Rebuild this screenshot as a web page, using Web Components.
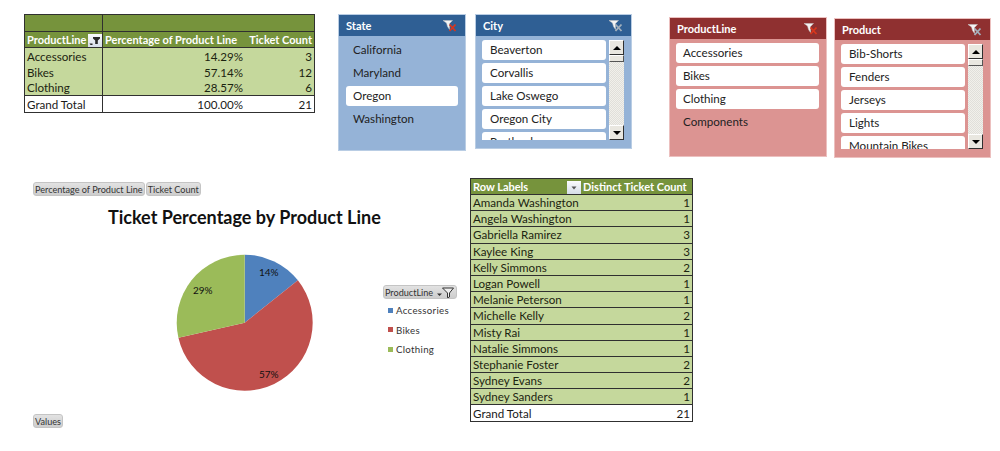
<!DOCTYPE html>
<html>
<head>
<meta charset="utf-8">
<title>Ticket dashboard</title>
<style>
  html, body { margin: 0; background: #fff; }
  body { font-family: Lato, "Open Sans", sans-serif; font-size: 11.6px; color: #1a1a1a; }
  .top { display: flex; align-items: flex-start; height: 178px; }
  .bottom { display: flex; align-items: flex-start; padding-left: 33px; }
  .m1 { margin: 14px 0 0 24px; }
  .m2 { margin: 14px 0 0 23px; }
  .m3 { margin: 14px 0 0 9px; }
  .m4 { margin: 17px 0 0 37px; }
  .m5 { margin: 18px 0 0 7px; }
  .m6 { margin: 0 0 0 13px; }
</style>
</head>
<body>
<div class="top">
  <pivot-table class="m1" style="width:291px;--cols:77px 143px 1fr">
    <pivot-row kind="head" h="17" line><pivot-cell></pivot-cell><pivot-cell sep></pivot-cell><pivot-cell></pivot-cell></pivot-row>
    <pivot-row kind="head" h="16" line><pivot-cell>ProductLine<filter-button slot="end" funnel></filter-button></pivot-cell><pivot-cell sep>Percentage of Product Line</pivot-cell><pivot-cell end>Ticket Count</pivot-cell></pivot-row>
    <pivot-row h="16"><pivot-cell>Accessories</pivot-cell><pivot-cell sep end>14.29%</pivot-cell><pivot-cell end>3</pivot-cell></pivot-row>
    <pivot-row h="16"><pivot-cell>Bikes</pivot-cell><pivot-cell sep end>57.14%</pivot-cell><pivot-cell end>12</pivot-cell></pivot-row>
    <pivot-row h="16" line><pivot-cell>Clothing</pivot-cell><pivot-cell sep end>28.57%</pivot-cell><pivot-cell end>6</pivot-cell></pivot-row>
    <pivot-row kind="total" h="16"><pivot-cell>Grand Total</pivot-cell><pivot-cell sep end>100.00%</pivot-cell><pivot-cell end>21</pivot-cell></pivot-row>
  </pivot-table>

  <slicer-box class="m2" label="State" style="width:128px;height:137px;--inset:7px" active>
    <slicer-item plain>California</slicer-item>
    <slicer-item plain>Maryland</slicer-item>
    <slicer-item>Oregon</slicer-item>
    <slicer-item plain>Washington</slicer-item>
  </slicer-box>

  <slicer-box class="m3" label="City" style="width:157px;height:135px" list="100" scroll>
    <slicer-item>Beaverton</slicer-item>
    <slicer-item>Corvallis</slicer-item>
    <slicer-item>Lake Oswego</slicer-item>
    <slicer-item>Oregon City</slicer-item>
    <slicer-item>Portland</slicer-item>
  </slicer-box>

  <slicer-box class="m4" label="ProductLine" theme="red" style="width:158px;height:140px" active>
    <slicer-item>Accessories</slicer-item>
    <slicer-item>Bikes</slicer-item>
    <slicer-item>Clothing</slicer-item>
    <slicer-item plain>Components</slicer-item>
  </slicer-box>

  <slicer-box class="m5" label="Product" theme="red" style="width:157px;height:140px" list="105" scroll>
    <slicer-item>Bib-Shorts</slicer-item>
    <slicer-item>Fenders</slicer-item>
    <slicer-item>Jerseys</slicer-item>
    <slicer-item>Lights</slicer-item>
    <slicer-item>Mountain Bikes</slicer-item>
  </slicer-box>
</div>

<div class="bottom">
  <pie-chart heading="Ticket Percentage by Product Line">
    <pivot-button slot="fields">Percentage of Product Line</pivot-button>
    <pivot-button slot="fields">Ticket Count</pivot-button>
    <pivot-button slot="values">Values</pivot-button>
  </pie-chart>
  <chart-legend>
    <pivot-button filter>ProductLine</pivot-button>
    <legend-entry color="#4f81bd">Accessories</legend-entry>
    <legend-entry color="#c0504d">Bikes</legend-entry>
    <legend-entry color="#9bbb59">Clothing</legend-entry>
  </chart-legend>
  <pivot-table class="m6" style="width:223px;--cols:110px 1fr">
    <pivot-row kind="head" h="16" line><pivot-cell>Row Labels<filter-button slot="end"></filter-button></pivot-cell><pivot-cell>Distinct Ticket Count</pivot-cell></pivot-row>
    <pivot-row h="16.2" line><pivot-cell>Amanda Washington</pivot-cell><pivot-cell end>1</pivot-cell></pivot-row>
    <pivot-row h="16.2" line><pivot-cell>Angela Washington</pivot-cell><pivot-cell end>1</pivot-cell></pivot-row>
    <pivot-row h="16.2" line><pivot-cell>Gabriella Ramirez</pivot-cell><pivot-cell end>3</pivot-cell></pivot-row>
    <pivot-row h="16.2" line><pivot-cell>Kaylee King</pivot-cell><pivot-cell end>3</pivot-cell></pivot-row>
    <pivot-row h="16.2" line><pivot-cell>Kelly Simmons</pivot-cell><pivot-cell end>2</pivot-cell></pivot-row>
    <pivot-row h="16.2" line><pivot-cell>Logan Powell</pivot-cell><pivot-cell end>1</pivot-cell></pivot-row>
    <pivot-row h="16.2" line><pivot-cell>Melanie Peterson</pivot-cell><pivot-cell end>1</pivot-cell></pivot-row>
    <pivot-row h="16.2" line><pivot-cell>Michelle Kelly</pivot-cell><pivot-cell end>2</pivot-cell></pivot-row>
    <pivot-row h="16.2" line><pivot-cell>Misty Rai</pivot-cell><pivot-cell end>1</pivot-cell></pivot-row>
    <pivot-row h="16.2" line><pivot-cell>Natalie Simmons</pivot-cell><pivot-cell end>1</pivot-cell></pivot-row>
    <pivot-row h="16.2" line><pivot-cell>Stephanie Foster</pivot-cell><pivot-cell end>2</pivot-cell></pivot-row>
    <pivot-row h="16.2" line><pivot-cell>Sydney Evans</pivot-cell><pivot-cell end>2</pivot-cell></pivot-row>
    <pivot-row h="16.2" line><pivot-cell>Sydney Sanders</pivot-cell><pivot-cell end>1</pivot-cell></pivot-row>
    <pivot-row kind="total" h="16"><pivot-cell>Grand Total</pivot-cell><pivot-cell end>21</pivot-cell></pivot-row>
  </pivot-table>
</div>

<script>
class PivotTable extends HTMLElement {
  constructor() {
    super();
    this.attachShadow({ mode: 'open' }).innerHTML = `
      <style>
      :host {display: block;box-sizing: border-box;border: 1px solid #303030;flex: none;}
      </style>
      <slot></slot>`;
  }
}

class PivotRow extends HTMLElement {
  constructor() {
    super();
    this.attachShadow({ mode: 'open' }).innerHTML = `
      <style>
      :host {display: grid;grid-template-columns: var(--cols);box-sizing: border-box;background: #c5d89c;color: #1c2410;}
      :host([kind="head"]) {background: #76933c;color: #fff;font-weight: 700;font-size: 11px;}
      :host([kind="total"]) {background: #fff;color: #1a1a1a;}
      :host([line]) {border-bottom: 1px solid #303030;}
      </style>
      <slot></slot>`;
  }
  connectedCallback() {
    this.style.height = this.getAttribute('h') + 'px';
  }
}

class PivotCell extends HTMLElement {
  constructor() {
    super();
    this.attachShadow({ mode: 'open' }).innerHTML = `
      <style>
      :host {display: flex;align-items: center;padding: 1px 2px 0;min-width: 0;white-space: nowrap;line-height: 14px;}
      :host([sep]) {border-left: 1px solid #303030;}
      :host([end]) {justify-content: flex-end;}
      :host([end]) .grow {display: none;}
      .grow {flex: 1;}
      </style>
      <slot></slot><span class="grow"></span><slot name="end"></slot>`;
  }
}

class FilterButton extends HTMLElement {
  constructor() {
    super();
    const glyph = this.hasAttribute('funnel')
      ? '<path d="M5 3h7v1.500L9.800 6.500V10H7.200V6.500L5 4.500z" fill="#2a2a2a"/><path d="M1.500 9.500h3v1.500h-2z" fill="#2a2a2a"/>'
      : '<path d="M4.500 5.500h5L7 8.500z" fill="#555"/>';
    this.attachShadow({ mode: 'open' }).innerHTML = `
      <style>
      :host {display: block;width: 14px;height: 13px;flex: none;margin-right: -2px;}
      svg {display: block;}
      </style>
      <svg width="14" height="13" viewBox="0 0 14 13">
        <defs><linearGradient id="g" x1="0" y1="0" x2="0" y2="1"><stop offset="0" stop-color="#fafbfd"/><stop offset="1" stop-color="#d6dde8"/></linearGradient></defs>
        <rect width="14" height="13" fill="url(#g)"/>${glyph}
      </svg>`;
  }
}

class SlicerBox extends HTMLElement {
  constructor() {
    super();
    const scroll = this.hasAttribute('scroll');
    const x = this.hasAttribute('active') ? '#d9361c' : '#a3b0bd';
    this.attachShadow({ mode: 'open' }).innerHTML = `
      <style>
      :host {display: flex;flex-direction: column;flex: none;box-sizing: border-box;--head: #2f5f94;--body: #95b3d7;--edge: #b9cde4;
        border: 1px solid var(--edge);background: var(--body);color: #222;}
      :host([theme="red"]) {--head: #8f3030;--body: #dc9492;--edge: #ecc0bf;}
      header {display: flex;align-items: center;justify-content: space-between;height: 21px;padding: 0 8px 0 7px;background: var(--head);color: #fff;font-weight: 700;font-size: 11px;flex: none;}
      .content {display: flex;gap: 3px;padding: 4px 7px 0 var(--inset, 6px);}
      .list {flex: 1;min-width: 0;overflow: hidden;display: flex;flex-direction: column;gap: 3px;}
      :host([scroll]) ::slotted(slicer-item) {padding-left: 8px;}
      </style>
      <header><span>${this.getAttribute('label')}</span>
        <svg width="14" height="12" viewBox="0 0 14 12">
          <path d="M0 0.500H9.500L6.500 3.500V9.500L4.500 6.500L3.500 3z" fill="#f4f4f4" stroke="#c4c4c4" stroke-width=".5"/>
          <path d="M6.500 4.500l6 6.500M12.500 4.500L6.500 11" stroke="${x}" stroke-width="1.800" fill="none"/>
        </svg>
      </header>
      <div class="content">
        <div class="list"${this.hasAttribute('list') ? ` style="height:${this.getAttribute('list')}px"` : ''}><slot></slot></div>
        ${scroll ? '<scroll-bar></scroll-bar>' : ''}
      </div>`;
  }
}

class SlicerItem extends HTMLElement {
  constructor() {
    super();
    this.attachShadow({ mode: 'open' }).innerHTML = `
      <style>
      :host {display: flex;align-items: center;flex: none;box-sizing: border-box;height: 20px;padding: 0 7px 1px;background: #fff;border-radius: 3px;white-space: nowrap;}
      :host([plain]) {background: transparent;}
      </style>
      <slot></slot>`;
  }
}

class ScrollBar extends HTMLElement {
  constructor() {
    super();
    this.attachShadow({ mode: 'open' }).innerHTML = `
      <style>
      :host {display: flex;flex-direction: column;width: 15px;flex: none;background: repeating-conic-gradient(#f1f0eb 0 25%, #e0dfda 0 50%) 0 0 / 2px 2px;}
      .btn {box-sizing: border-box;width: 15px;height: 15px;flex: none;background: #e9e7e0;border: 1px solid;border-color: #fff #303030 #303030 #fff;display: flex;align-items: center;justify-content: center;}
      .thumb {box-sizing: border-box;height: 7px;flex: none;background: #e9e7e0;border: 1px solid;border-color: #fff #555 #555 #fff;}
      .gap {flex: 1;}
      i {width: 0;height: 0;border: 4px solid transparent;}
      .up {border-top: 0;border-bottom-color: #000;}
      .down {border-bottom: 0;border-top-color: #000;}
      </style>
      <div class="btn"><i class="up"></i></div>
      <div class="thumb"></div>
      <div class="gap"></div>
      <div class="btn"><i class="down"></i></div>`;
  }
}

class PivotButton extends HTMLElement {
  constructor() {
    super();
    const icon = this.hasAttribute('filter')
      ? `<svg width="18" height="11" viewBox="0 0 18 11"><path d="M0 6.500h5L2.500 9z" fill="#333"/><path d="M5.500 1h11L12.500 6v4l-2 .800V6z" fill="#eee" stroke="#333"/></svg>`
      : '';
    this.attachShadow({ mode: 'open' }).innerHTML = `
      <style>
      :host {display: flex;align-items: center;justify-content: space-between;box-sizing: border-box;height: 14px;padding: 0 1px;border: 1px solid #c4c4c4;border-radius: 3px;background: linear-gradient(#e2e2e2, #cdcdcd);font-size: 9.100px;color: #333;white-space: nowrap;}
      :host([filter]) {margin-bottom: -1.500px;}
      </style>
      <slot></slot>${icon}`;
  }
}

class PieChart extends HTMLElement {
  constructor() {
    super();
    const cx = 70.7, cy = 69.7, r = 68;
    const pt = a => (cx + r * Math.sin(a * Math.PI / 180)).toFixed(1) + ' ' + (cy - r * Math.cos(a * Math.PI / 180)).toFixed(1);
    const slice = (a, b, c) => `<path d="M${cx} ${cy}L${pt(a)}A${r} ${r} 0 ${b - a > 180 ? 1 : 0} 1 ${pt(b)}Z" fill="${c}"/>`;
    this.attachShadow({ mode: 'open' }).innerHTML = `
      <style>
      :host {display: block;width: 350px;flex: none;padding-top: 4px;}
      .fields {display: flex;gap: 1px;}
      h2 {margin: 9px 0 0 75px;width: 272px;font-size: 18px;line-height: 24px;font-weight: 700;color: #111;white-space: nowrap;text-align: center;}
      svg {display: block;margin: 24px 0 0 141px;}
      text {font-size: 10px;fill: #111;text-anchor: middle;font-family: Lato, "Open Sans", sans-serif;}
      .values {display: flex;margin-top: 21px;}
      </style>
      <div class="fields"><slot name="fields"></slot></div>
      <h2>${this.getAttribute('heading')}</h2>
      <svg width="141" height="140" viewBox="0 0 141 140">
        ${slice(0, 51.43, '#4f81bd')}${slice(51.43, 257.14, '#c0504d')}${slice(257.14, 360, '#9bbb59')}
        <text x="94.700" y="23">14%</text>
        <text x="94.700" y="125">57%</text>
        <text x="28.700" y="41">29%</text>
      </svg>
      <div class="values"><slot name="values"></slot></div>`;
  }
}

class ChartLegend extends HTMLElement {
  constructor() {
    super();
    this.attachShadow({ mode: 'open' }).innerHTML = `
      <style>
      :host {display: flex;flex-direction: column;width: 74px;flex: none;margin-top: 107px;}
      </style>
      <slot></slot>`;
  }
}

class LegendEntry extends HTMLElement {
  constructor() {
    super();
    this.attachShadow({ mode: 'open' }).innerHTML = `
      <style>
      :host {display: flex;align-items: center;gap: 3px;height: 14px;margin: 5.500px 0 0 5px;font-size: 9.700px;color: #333;letter-spacing: .3px;white-space: nowrap;}
      i {width: 5px;height: 5px;background: ${this.getAttribute('color')};}
      </style>
      <i></i><slot></slot>`;
  }
}

customElements.define('pivot-table', PivotTable);
customElements.define('pivot-row', PivotRow);
customElements.define('pivot-cell', PivotCell);
customElements.define('filter-button', FilterButton);
customElements.define('slicer-box', SlicerBox);
customElements.define('slicer-item', SlicerItem);
customElements.define('scroll-bar', ScrollBar);
customElements.define('pivot-button', PivotButton);
customElements.define('pie-chart', PieChart);
customElements.define('chart-legend', ChartLegend);
customElements.define('legend-entry', LegendEntry);
</script>
</body>
</html>
